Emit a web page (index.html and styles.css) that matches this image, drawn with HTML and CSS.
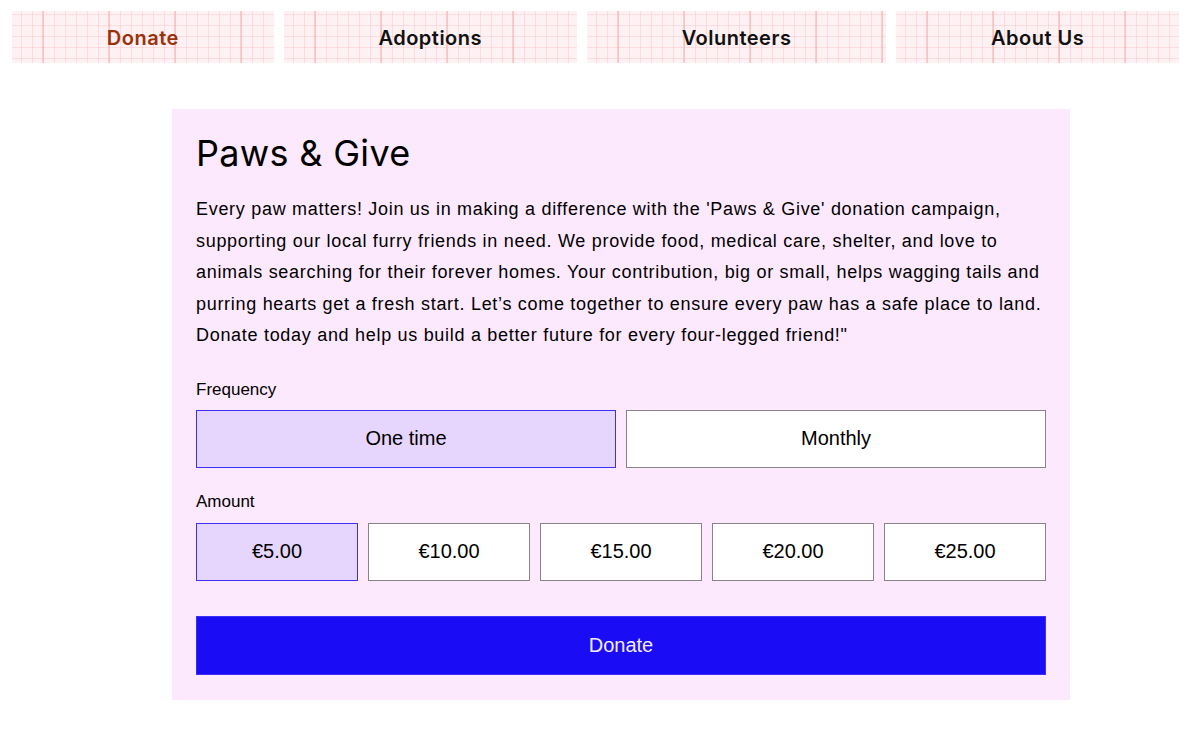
FILE: index.html
```html
<!DOCTYPE html>
<html lang="en">
<head>
<meta charset="utf-8">
<title>Paws &amp; Give</title>
<link rel="stylesheet" href="styles.css">
</head>
<body>
<nav class="nav">
  <a class="tab tab-active" href="#">Donate</a>
  <a class="tab" href="#">Adoptions</a>
  <a class="tab" href="#">Volunteers</a>
  <a class="tab" href="#">About Us</a>
</nav>
<main class="card">
  <h1 class="title">Paws &amp; Give</h1>
  <p class="intro">Every paw matters! Join us in making a difference with the 'Paws &amp; Give' donation campaign,<br> supporting our local furry friends in need. We provide food, medical care, shelter, and love to<br> animals searching for their forever homes. Your contribution, big or small, helps wagging tails and<br> purring hearts get a fresh start. Let’s come together to ensure every paw has a safe place to land.<br> Donate today and help us build a better future for every four-legged friend!"</p>
  <div class="group">
    <div class="label">Frequency</div>
    <div class="options options-2">
      <button class="opt opt-selected">One time</button>
      <button class="opt">Monthly</button>
    </div>
  </div>
  <div class="group group-amount">
    <div class="label">Amount</div>
    <div class="options options-5">
      <button class="opt opt-selected">€5.00</button>
      <button class="opt">€10.00</button>
      <button class="opt">€15.00</button>
      <button class="opt">€20.00</button>
      <button class="opt">€25.00</button>
    </div>
  </div>
  <button class="donate">Donate</button>
</main>
</body>
</html>
```

FILE: styles.css
```css
* { box-sizing: border-box; }
html, body { margin: 0; padding: 0; background: #ffffff; }
body { font-family: "Liberation Sans", Arial, sans-serif; color: #111; }

.nav {
  display: flex;
  gap: 10px;
  padding: 11px 21px 0 12px;
}
.tab {
  flex: 1 1 auto;
  height: 52px;
  display: flex;
  align-items: center;
  justify-content: center;
  padding-top: 2px;
  font-family: "Inter", "Noto Sans", sans-serif;
  font-weight: 600;
  font-size: 20px;
  letter-spacing: 0.5px;
  color: #111;
  text-decoration: none;
  background-color: #fdf1f4;
  background-image:
    linear-gradient(90deg, rgba(248, 160, 160, 0.42) 0 2px, transparent 2px),
    linear-gradient(90deg, rgba(250, 175, 175, 0.32) 0 1px, transparent 1px),
    linear-gradient(180deg, rgba(250, 175, 175, 0.32) 0 1px, transparent 1px);
  background-size: 66px 100%, 11px 100%, 100% 11px;
  background-position: 30px 0, 9px 0, 0 3px;
}
.tab-active { color: #9a3209; }

.card {
  margin: 46px 0 0 172px;
  width: 898px;
  background: #fde9fd;
  padding: 24px 24px 25px;
}
.title {
  margin: 0;
  font-family: "Inter", "Noto Sans", sans-serif;
  font-weight: 400;
  font-size: 36px;
  line-height: 40px;
  letter-spacing: 0.3px;
  color: #000;
}
.intro {
  margin: 21px 0 0;
  font-size: 18px;
  line-height: 31.5px;
  letter-spacing: 0.7px;
  color: #000;
}
.group { margin-top: 28px; }
.group-amount { margin-top: 24px; }
.label {
  font-size: 17px;
  line-height: 20px;
  color: #000;
}
.options {
  display: grid;
  gap: 10px;
  margin-top: 10px;
}
.group-amount .options { margin-top: 11px; }
.options-2 { grid-template-columns: 1fr 1fr; }
.options-5 { grid-template-columns: repeat(5, 1fr); }
.opt {
  height: 58px;
  font-family: "Liberation Sans", Arial, sans-serif;
  font-size: 20px;
  color: #000;
  background: #ffffff;
  border: 1px solid #8a838a;
  padding: 0;
}
.opt-selected {
  background: #e6d6fd;
  border-color: #3b31f3;
}
.donate {
  display: block;
  width: 100%;
  height: 59px;
  margin-top: 35px;
  background: #1a0cf4;
  border: 1px solid #3b31f3;
  color: #f4ecff;
  font-family: "Liberation Sans", Arial, sans-serif;
  font-size: 20px;
}
```
